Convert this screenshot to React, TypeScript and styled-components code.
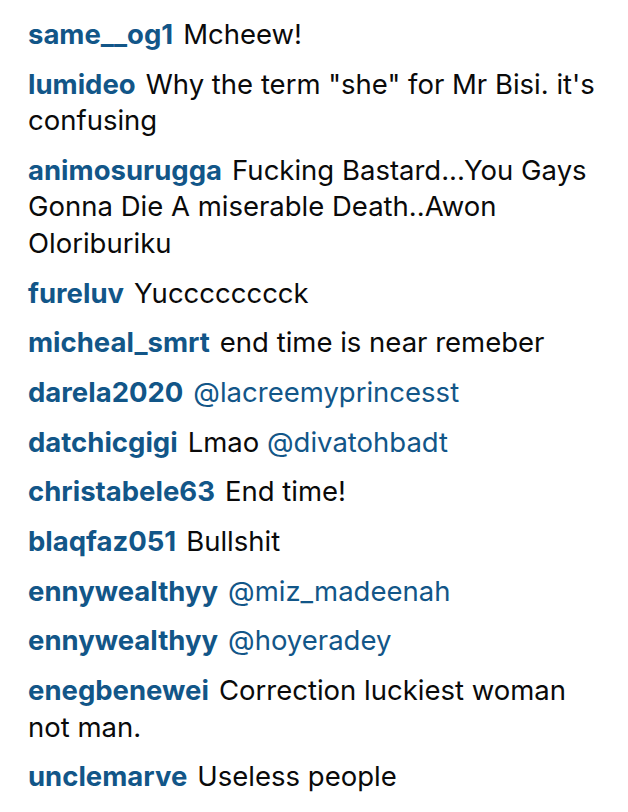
import React from "react";
import styled, { createGlobalStyle } from "styled-components";

const Global = createGlobalStyle`
  html, body { margin: 0; padding: 0; background: #ffffff; }
  body { font-family: "Inter", "Lato", sans-serif; -webkit-font-smoothing: antialiased; }
`;

const List = styled.ul`
  list-style: none;
  margin: 0;
  padding: 16px 28px 0 28px;
  width: 628px;
  box-sizing: border-box;
  display: flex;
  flex-direction: column;
  gap: 13.2px;
`;

const Item = styled.li`
  font-size: 27.5px;
  line-height: 36.5px;
  color: #0a0a0a;
  word-wrap: break-word;
`;

const User = styled.a`
  color: #125688;
  font-weight: 700;
  text-decoration: none;
  margin-right: 10px;
`;

const Mention = styled.a`
  color: #125688;
  text-decoration: none;
`;

type Part = string | { m: string };
const comments: { user: string; parts: Part[] }[] = [
  { user: "same__og1", parts: ["Mcheew!"] },
  { user: "lumideo", parts: ['Why the term "she" for Mr Bisi. it\'s confusing'] },
  { user: "animosurugga", parts: ["Fucking Bastard...You Gays Gonna Die A miserable Death..Awon Oloriburiku"] },
  { user: "fureluv", parts: ["Yucccccccck"] },
  { user: "micheal_smrt", parts: ["end time is near remeber"] },
  { user: "darela2020", parts: [{ m: "@lacreemyprincesst" }] },
  { user: "datchicgigi", parts: ["Lmao ", { m: "@divatohbadt" }] },
  { user: "christabele63", parts: ["End time!"] },
  { user: "blaqfaz051", parts: ["Bullshit"] },
  { user: "ennywealthyy", parts: [{ m: "@miz_madeenah" }] },
  { user: "ennywealthyy", parts: [{ m: "@hoyeradey" }] },
  { user: "enegbenewei", parts: ["Correction luckiest woman not man."] },
  { user: "unclemarve", parts: ["Useless people"] },
];

export default function App() {
  return (
    <>
      <Global />
      <List>
        {comments.map((c, i) => (
          <Item key={i}>
            <User href="#">{c.user}</User>
            {c.parts.map((p, j) =>
              typeof p === "string" ? (
                <React.Fragment key={j}>{p}</React.Fragment>
              ) : (
                <Mention key={j} href="#">{p.m}</Mention>
              )
            )}
          </Item>
        ))}
      </List>
    </>
  );
}
